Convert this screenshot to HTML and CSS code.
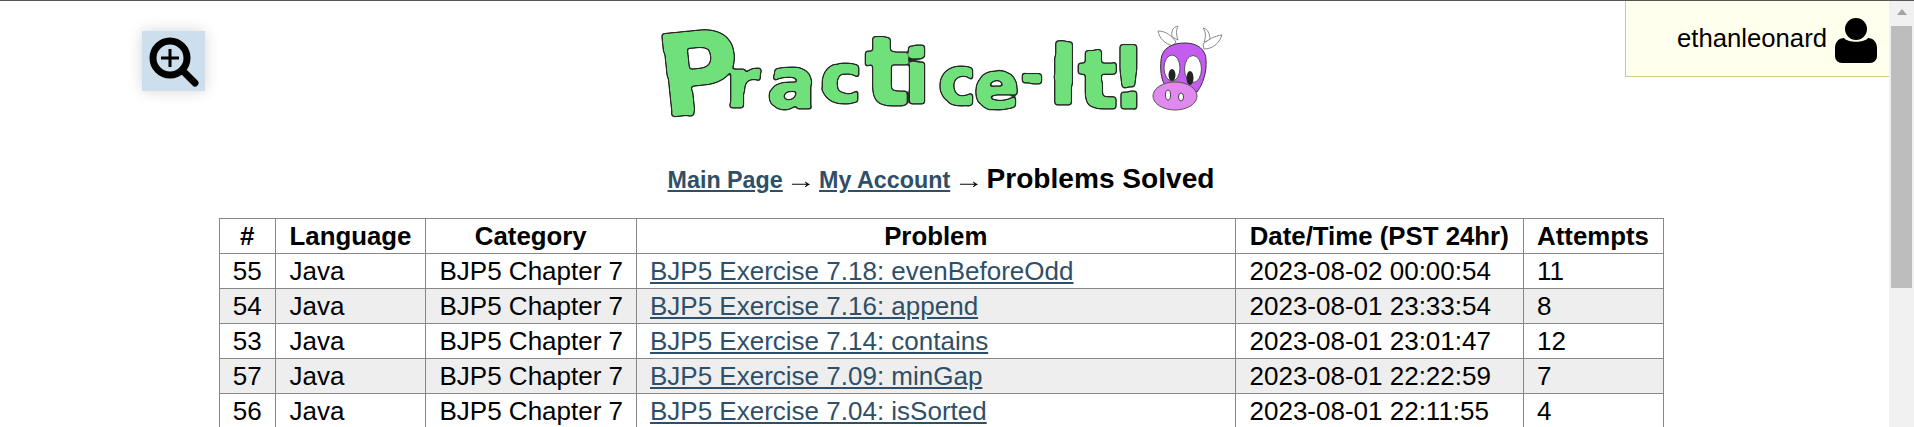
FILE: index.html
```html
<!DOCTYPE html>
<html lang="en">
<head>
<meta charset="utf-8">
<title>Problems Solved - Practice-It</title>
<link rel="stylesheet" href="styles.css">
</head>
<body>
<div class="page">
  <main class="main">
    <button class="zoom-btn" aria-label="Zoom">
      <svg width="63" height="60" viewBox="0 0 63 60">
        <circle cx="28" cy="27" r="17" fill="none" stroke="#000" stroke-width="7"/>
        <path d="M19 27H37M28 18V36" fill="none" stroke="#000" stroke-width="3"/>
        <path d="M41 40L53 52" fill="none" stroke="#000" stroke-width="7" stroke-linecap="round"/>
      </svg>
    </button>
    <div class="userbox">
      <span>ethanleonard</span>
      <svg width="42" height="46" viewBox="0 0 42 46">
        <circle cx="21" cy="12" r="11"/>
        <path d="M9 21C13 26 29 26 33 21C38 21 42 25 42 31V39C42 43 39 46 35 46H7C3 46 0 43 0 39V31C0 25 4 21 9 21Z"/>
      </svg>
    </div>
    <header class="logo">
      <svg width="600" height="120" viewBox="641 20 600 120">
        <defs>
          <filter id="hand" x="-5%" y="-20%" width="110%" height="140%" color-interpolation-filters="sRGB">
            <feTurbulence type="fractalNoise" baseFrequency="0.025" numOctaves="1" seed="7" result="n"/>
            <feDisplacementMap in="SourceAlpha" in2="n" scale="5" xChannelSelector="R" yChannelSelector="G" result="d"/>
            <feGaussianBlur in="d" stdDeviation="1.7" result="b"/>
            <feComponentTransfer in="b" result="o"><feFuncA type="linear" slope="6" intercept="-1.2"/></feComponentTransfer>
            <feFlood flood-color="#2a2a2a"/>
            <feComposite in2="o" operator="in" result="line"/>
            <feComponentTransfer in="b" result="i"><feFuncA type="linear" slope="6" intercept="-3.2"/></feComponentTransfer>
            <feFlood flood-color="#70e07a"/>
            <feComposite in2="i" operator="in" result="fill"/>
            <feMerge><feMergeNode in="line"/><feMergeNode in="fill"/></feMerge>
          </filter>
        </defs>
        <text class="letters"><tspan x="662" y="117" font-size="112" rotate="-6">P</tspan><tspan x="726" y="107" font-size="68">r</tspan><tspan x="768" y="108" font-size="72">a</tspan><tspan x="820" y="103" font-size="72">c</tspan><tspan x="864" y="105" font-size="96">t</tspan><tspan x="904" y="104" font-size="76">i</tspan><tspan x="938" y="104" font-size="66">c</tspan><tspan x="975" y="108" font-size="64">e</tspan><tspan x="1019" y="96" font-size="60">-</tspan><tspan x="1048" y="104" font-size="84">I</tspan><tspan x="1078" y="108" font-size="82">t</tspan><tspan x="1109" y="108" font-size="85">!</tspan></text>
        <g class="cow">
          <path class="horn" d="M1172 37C1171 31 1173 27 1178 26C1176 30 1176 34 1178 40Z"/>
          <path class="horn" d="M1173 46C1165 44 1159 38 1158 31C1166 31 1172 36 1176 42Z"/>
          <path class="horn" d="M1204 42C1206 37 1206 32 1203 28C1208 29 1210 34 1210 40Z"/>
          <path class="horn" d="M1204 49C1212 49 1219 44 1222 35C1214 36 1208 40 1203 44Z"/>
          <path class="head" d="M1161 60C1162 48 1172 43 1185 43C1198 43 1206 50 1206 60C1207 72 1203 84 1197 92L1165 86C1161 78 1160 70 1161 60Z"/>
          <ellipse class="eye" cx="1172" cy="68" rx="8" ry="13"/>
          <ellipse class="eye" cx="1193" cy="69" rx="8.5" ry="13.5"/>
          <ellipse class="pupil" cx="1172" cy="75" rx="3.5" ry="6"/>
          <ellipse class="pupil" cx="1190" cy="78" rx="3.5" ry="7"/>
          <ellipse class="snout" cx="1175" cy="96" rx="22" ry="14"/>
          <ellipse class="nostril" cx="1168" cy="95" rx="2.5" ry="5"/>
          <ellipse class="nostril" cx="1181" cy="97" rx="2.5" ry="4"/>
        </g>
      </svg>
    </header>
    <nav class="crumbs">
      <a href="#">Main Page</a> <span class="arrow">→</span> <a href="#">My Account</a> <span class="arrow">→</span> <strong>Problems Solved</strong>
    </nav>
    <table class="results">
      <colgroup>
        <col class="c-num"><col class="c-lang"><col class="c-cat"><col class="c-prob"><col class="c-date"><col class="c-att">
      </colgroup>
      <thead>
        <tr><th>#</th><th>Language</th><th>Category</th><th>Problem</th><th>Date/Time (PST 24hr)</th><th>Attempts</th></tr>
      </thead>
      <tbody>
        <tr><td class="num">55</td><td>Java</td><td>BJP5 Chapter 7</td><td><a href="#">BJP5 Exercise 7.18: evenBeforeOdd</a></td><td>2023-08-02 00:00:54</td><td>11</td></tr>
        <tr><td class="num">54</td><td>Java</td><td>BJP5 Chapter 7</td><td><a href="#">BJP5 Exercise 7.16: append</a></td><td>2023-08-01 23:33:54</td><td>8</td></tr>
        <tr><td class="num">53</td><td>Java</td><td>BJP5 Chapter 7</td><td><a href="#">BJP5 Exercise 7.14: contains</a></td><td>2023-08-01 23:01:47</td><td>12</td></tr>
        <tr><td class="num">57</td><td>Java</td><td>BJP5 Chapter 7</td><td><a href="#">BJP5 Exercise 7.09: minGap</a></td><td>2023-08-01 22:22:59</td><td>7</td></tr>
        <tr><td class="num">56</td><td>Java</td><td>BJP5 Chapter 7</td><td><a href="#">BJP5 Exercise 7.04: isSorted</a></td><td>2023-08-01 22:11:55</td><td>4</td></tr>
      </tbody>
    </table>
  </main>
  <aside class="scrollbar" aria-hidden="true">
    <div class="sb-up"></div>
    <div class="sb-thumb"></div>
  </aside>
</div>
</body>
</html>
```
FILE: styles.css
```css
* { box-sizing: border-box; }
html, body { margin: 0; height: 427px; overflow: hidden; background: #fff; }
body {
  font-family: "Liberation Sans", Arial, sans-serif;
  font-size: 25.6px;
  color: #000;
  border-top: 1px solid #555;
}
.page { display: flex; height: 426px; }
.main {
  position: relative;
  flex: 1;
  min-width: 0;
  padding: 19px 7px 0 0;
  overflow: hidden;
}
.zoom-btn {
  position: absolute;
  left: 142px;
  top: 30px;
  width: 63px;
  height: 60px;
  padding: 0;
  border: 0;
  background: #cddfec;
  box-shadow: 0 0 14px rgba(0, 0, 0, 0.16);
  display: block;
}
.zoom-btn svg { display: block; }
.userbox {
  position: absolute;
  right: 0;
  top: 0;
  width: 264px;
  height: 76px;
  display: flex;
  align-items: center;
  justify-content: flex-end;
  gap: 8px;
  padding: 0 12px 0 0;
  font-size: 25.7px;
  background: #ffffee;
  border-left: 1px solid #cccc88;
  border-bottom: 1px solid #cccc88;
}
.userbox svg { display: block; margin-top: 3px; }
.logo { display: flex; justify-content: center; height: 120px; }
.logo svg { display: block; }
.letters {
  font-family: "DejaVu Sans", sans-serif;
  font-weight: 700;
  fill: #000;
  stroke: #000;
  stroke-width: 1.5;
  stroke-linejoin: round;
  filter: url(#hand);
}
.cow { stroke: #333; stroke-width: 1; filter: blur(0.5px); }
.horn { fill: #fff; stroke: #888; }
.head { fill: #c45cf0; }
.eye { fill: #fff; stroke: #555; }
.pupil { fill: #222; stroke: none; }
.snout { fill: #e08af0; stroke: #555; }
.nostril { fill: #fff; stroke: #444; }
.crumbs {
  margin-top: 21px;
  height: 36px;
  line-height: 36px;
  text-align: center;
  font-size: 23.3px;
  font-weight: 400;
}
.crumbs a { font-weight: 700; color: #2f4f68; }
.crumbs strong { font-size: 28.1px; }
.arrow {
  font-family: "Liberation Serif", serif;
  font-size: 23.3px;
  display: inline-block;
  line-height: 0;
  transform: scale(1.3, 1);
}
.results {
  width: 1444px;
  margin: 21px auto 0;
  border-collapse: collapse;
  table-layout: fixed;
}
.c-num { width: 56.5px; }
.c-lang { width: 150px; }
.c-cat { width: 210.5px; }
.c-prob { width: 599.5px; }
.c-date { width: 287.5px; }
.c-att { width: 140px; }
.results th, .results td {
  border: 1px solid #888;
  padding: 0 13.5px;
  height: 35px;
  line-height: 34px;
  white-space: nowrap;
  overflow: hidden;
}
.results th { text-align: center; font-weight: 700; font-size: 25.8px; }
.results td { text-align: left; font-size: 26px; }
.results td.num { text-align: center; padding: 0; }
.results tbody tr:nth-child(even) { background: #eee; }
.results a { color: #2f4f68; }
.scrollbar {
  flex: 0 0 25px;
  background: #f1f1f1;
  display: flex;
  flex-direction: column;
  align-items: center;
}
.sb-up {
  flex: 0 0 25px;
  width: 21px;
  display: flex;
  align-items: center;
  justify-content: center;
}
.sb-up::before {
  content: "";
  margin-top: -4px;
  border-left: 5.5px solid transparent;
  border-right: 5.5px solid transparent;
  border-bottom: 6px solid #a3a3a3;
}
.sb-thumb { flex: 0 0 262px; width: 21px; background: #bdbdbd; }
```
